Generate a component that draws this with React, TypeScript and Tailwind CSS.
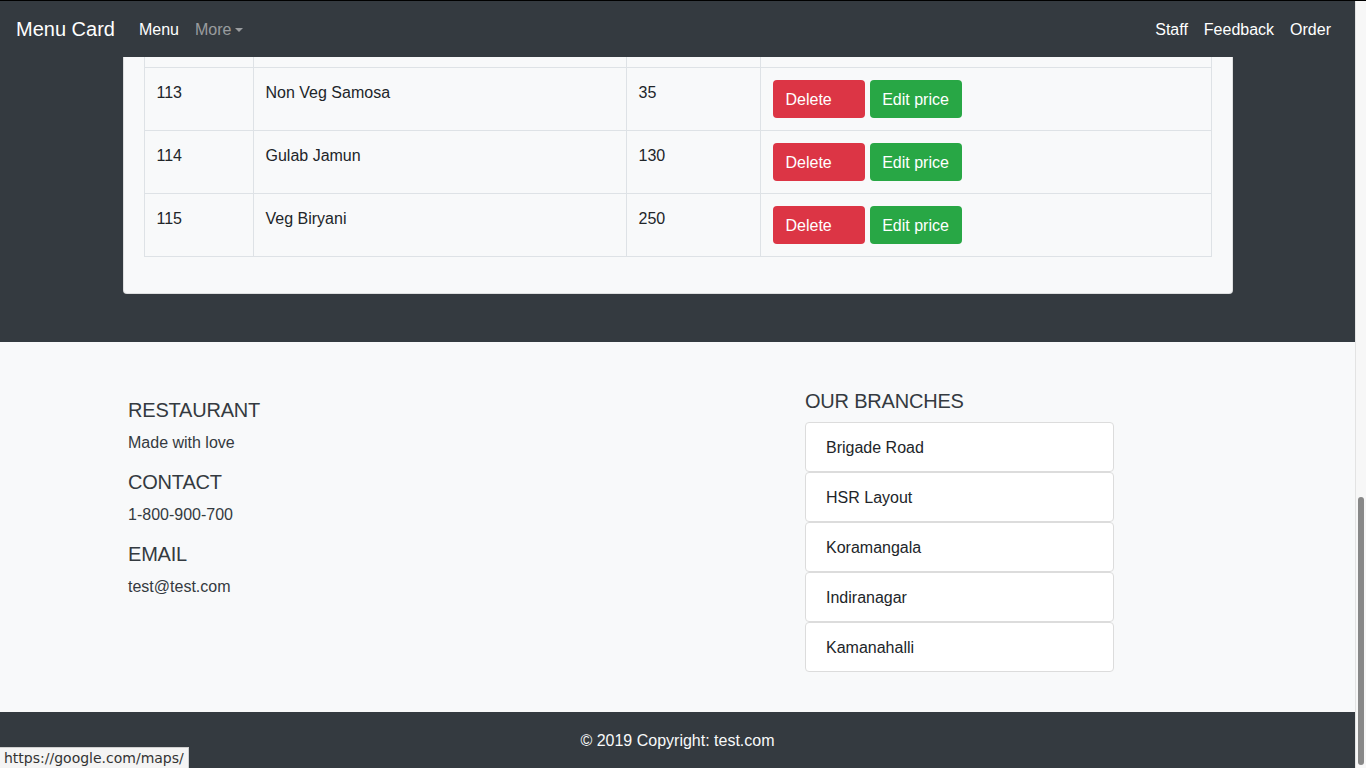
import React from "react";

const rows = [
  { id: "113", name: "Non Veg Samosa", price: "35" },
  { id: "114", name: "Gulab Jamun", price: "130" },
  { id: "115", name: "Veg Biryani", price: "250" },
];

const branches = ["Brigade Road", "HSR Layout", "Koramangala", "Indiranagar", "Kamanahalli"];

const cols = "grid grid-cols-[109px_373px_134px_451px]";
const cell = "px-3 pt-[13px] pb-[11px] border-r border-b border-[#dee2e6]";

function Navbar() {
  return (
    <nav className="h-[56px] bg-[#343a40] flex items-center px-4 text-white shrink-0">
      <span className="text-[20px] leading-[30px] mr-4">Menu Card</span>
      <a className="px-2 pt-px text-[16px] leading-6 text-white">Menu</a>
      <a className="px-2 pt-px text-[16px] leading-6 text-white/50 flex items-center">
        More
        <span className="ml-[4px] w-0 h-0 border-l-[4px] border-r-[4px] border-t-[4px] border-l-transparent border-r-transparent border-t-white/50" />
      </a>
      <div className="ml-auto flex">
        {["Staff", "Feedback", "Order"].map((l) => (
          <a key={l} className="px-2 pt-px text-[16px] leading-6 text-white">
            {l}
          </a>
        ))}
      </div>
    </nav>
  );
}

function MenuTable() {
  return (
    <div className="border-l border-[#dee2e6] text-[#212529] text-[16px] leading-6">
      <div className={cols}>
        {[0, 1, 2, 3].map((i) => (
          <div key={i} className="h-[11px] border-r border-b border-[#dee2e6]" />
        ))}
      </div>
      {rows.map((r) => (
        <div key={r.id} className={cols}>
          <div className={cell}>{r.id}</div>
          <div className={cell}>{r.name}</div>
          <div className={cell}>{r.price}</div>
          <div className="p-3 border-r border-b border-[#dee2e6] flex gap-[5px]">
            <button className="w-[92px] h-[38px] pt-px rounded-[4px] bg-[#dc3545] text-white text-[16px] text-left pl-[13px]">
              Delete
            </button>
            <button className="w-[92px] h-[38px] pt-px rounded-[4px] bg-[#28a745] text-white text-[16px]">
              Edit price
            </button>
          </div>
        </div>
      ))}
    </div>
  );
}

export default function App() {
  return (
    <div
      className="relative w-[1366px] h-[768px] overflow-hidden border-t border-black"
      style={{ fontFamily: '"Liberation Sans", Arial, sans-serif' }}
    >
      <div className="flex h-full">
        <div className="w-[1355px] flex flex-col">
          <Navbar />
          <section className="bg-[#343a40] pb-12">
            <div className="w-[1110px] mx-auto bg-[#f8f9fa] border-x border-b border-black/10 rounded-b-[4px] px-5 pb-5">
              <div className="mb-4">
                <MenuTable />
              </div>
            </div>
          </section>
          <footer className="bg-[#f8f9fa] flex items-start text-[#343a40]">
            <div className="w-[805px] pl-[128px] pt-[56px]">
              <h5 className="text-[20px] leading-[24px] mb-2 tracking-[-0.2px]">RESTAURANT</h5>
              <p className="text-[16px] leading-6 pt-px mb-[15px]">Made with love</p>
              <h5 className="text-[20px] leading-[24px] mb-2 tracking-[-0.2px]">CONTACT</h5>
              <p className="text-[16px] leading-6 pt-px mb-[15px]">1-800-900-700</p>
              <h5 className="text-[20px] leading-[24px] mb-2 tracking-[-0.2px]">EMAIL</h5>
              <p className="text-[16px] leading-6 pt-px">test@test.com</p>
            </div>
            <div className="w-[309px] pt-[47px] pb-[40px]">
              <h5 className="text-[20px] leading-[24px] mb-[9px] tracking-[-0.2px]">OUR BRANCHES</h5>
              <ul>
                {branches.map((b) => (
                  <li
                    key={b}
                    className="bg-white border border-[#dcdcdc] rounded-[4px] px-5 pt-[13px] pb-[11px] text-[16px] leading-6 text-[#212529]"
                  >
                    {b}
                  </li>
                ))}
              </ul>
            </div>
          </footer>
          <div className="bg-[#343a40] text-[#f8f9fa] text-center pt-[17px] pb-[15px] text-[16px] leading-6">
            © 2019 Copyright: test.com
          </div>
        </div>
        <div className="w-[11px] h-full bg-[#f7f7f7] border-l border-[#e3e3e3] relative">
          <div className="absolute left-[2px] top-[496px] w-[6px] h-[268px] rounded-full bg-[#888888]" />
        </div>
      </div>
      <div
        className="absolute left-0 bottom-0 h-[21px] px-[4px] bg-[#f4f4f4] border-t border-r border-[#cfcfcf] text-[14px] leading-[20px] text-[#333]"
        style={{ fontFamily: '"DejaVu Sans", sans-serif' }}
      >
        https://google.com/maps/
      </div>
    </div>
  );
}
